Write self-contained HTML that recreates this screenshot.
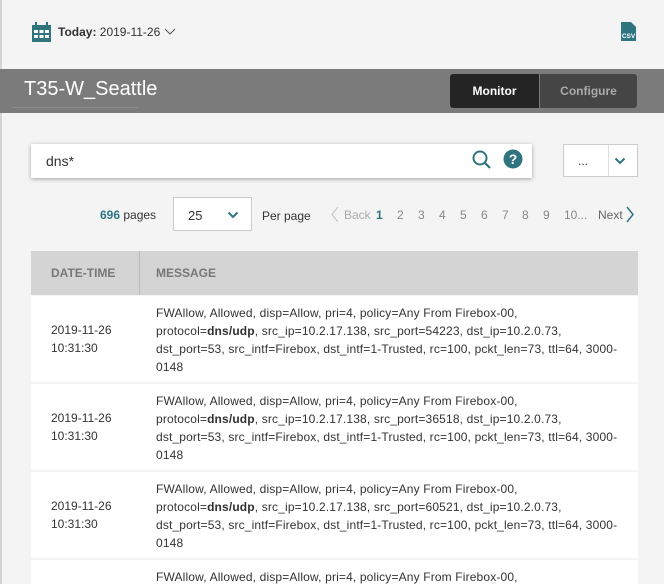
<!DOCTYPE html>
<html><head><meta charset="utf-8"><style>
html,body{margin:0;width:664px;height:584px;overflow:hidden}
body{background:#f4f4f4;font-family:"Liberation Sans",sans-serif;color:#333;position:relative}
.lb{position:absolute;left:0;top:0;width:2px;height:584px;background:#d4d4d4}
.abs{position:absolute}
.hdr{left:0;top:69px;width:664px;height:44px;background:#7b7b7b}
.title{left:24px;top:78px;color:#fff;font-size:20px}
.uline{left:12px;top:107px;width:126px;height:1px;background:#8d8d8d}
.btn{top:74px;height:34px;line-height:34px;text-align:center;font-size:12px;font-weight:bold}
.search{left:31px;top:144px;width:501px;height:34px;background:#fff;box-shadow:0 1px 4px rgba(0,0,0,.35)}
.sel{background:#fff;border:1px solid #ccc;box-sizing:border-box}
.pg span{position:absolute;top:208px;font-size:12px;color:#888}
.th{left:31px;top:251px;width:607px;height:44px;background:#d4d4d4;font-size:12px;font-weight:bold;color:#777}
.row{left:31px;width:607px;height:86px;background:#fff;font-size:12px;line-height:18px;overflow:hidden}
.row .d{position:absolute;left:20px;top:25px}
.row .m{position:absolute;left:125px;top:8px;width:480px;white-space:nowrap;letter-spacing:0.15px}
</style></head><body>
<div class="lb"></div>
<svg class="abs" style="left:32px;top:22px" width="19" height="20" viewBox="0 0 19 20"><rect x="0" y="3" width="19" height="17" fill="#2e7580"/><rect x="3" y="0" width="2" height="5" fill="#2e7580"/><rect x="14" y="0" width="2" height="5" fill="#2e7580"/><g fill="#fff"><rect x="2" y="8" width="4" height="3"/><rect x="7.5" y="8" width="4" height="3"/><rect x="13" y="8" width="4" height="3"/><rect x="2" y="13" width="4" height="3"/><rect x="7.5" y="13" width="4" height="3"/><rect x="13" y="13" width="4" height="3"/></g></svg>
<div class="abs" style="left:58px;top:25px;font-size:12px"><b>Today:</b> 2019-11-26 <svg width="12" height="8" viewBox="0 0 12 8"><path d="M1 1l5 5 5-5" stroke="#555" fill="none"/></svg></div>
<svg class="abs" style="left:621px;top:22px" width="15" height="19" viewBox="0 0 15 19"><path d="M0 0h10l5 5v14H0z" fill="#2e7580"/><text x="7.5" y="16" font-size="6.5" font-weight="bold" fill="#fff" text-anchor="middle" font-family="Liberation Sans">CSV</text></svg>
<div class="abs hdr"></div>
<div class="abs title">T35-W_Seattle</div>
<div class="abs uline"></div>
<div class="abs btn" style="left:450px;width:89px;background:#242424;color:#fff;border-radius:3px 0 0 3px">Monitor</div>
<div class="abs btn" style="left:540px;width:97px;background:#454545;color:#aaa;border-radius:0 3px 3px 0">Configure</div>
<div class="abs search"></div>
<div class="abs" style="left:46px;top:153px;font-size:14px">dns*</div>
<svg class="abs" style="left:472px;top:150px" width="20" height="20" viewBox="0 0 20 20"><circle cx="8" cy="8" r="6.5" stroke="#2e7580" stroke-width="2" fill="none"/><path d="M13 13l5 5" stroke="#2e7580" stroke-width="2.2"/></svg>
<svg class="abs" style="left:503px;top:149px" width="20" height="20" viewBox="0 0 20 20"><circle cx="10" cy="10" r="9.5" fill="#2e7580"/><text x="10" y="15" font-size="14" font-weight="bold" fill="#fff" text-anchor="middle" font-family="Liberation Sans">?</text></svg>
<div class="abs sel" style="left:563px;top:144px;width:75px;height:33px"></div>
<div class="abs" style="left:608px;top:145px;width:1px;height:31px;background:#ddd"></div>
<div class="abs" style="left:578px;top:154px;font-size:12px">...</div>
<svg class="abs" style="left:614px;top:157px" width="12" height="8" viewBox="0 0 12 8"><path d="M1.5 1.5l4.5 4.5 4.5-4.5" stroke="#2e7580" stroke-width="2" fill="none"/></svg>
<div class="abs" style="left:100px;top:208px;font-size:12px"><b style="color:#2e7580">696</b> pages</div>
<div class="abs sel" style="left:173px;top:197px;width:79px;height:34px"></div>
<div class="abs" style="left:188px;top:208px;font-size:13px">25</div>
<svg class="abs" style="left:227px;top:211px" width="12" height="8" viewBox="0 0 12 8"><path d="M1.5 1.5l4.5 4.5 4.5-4.5" stroke="#2e7580" stroke-width="2" fill="none"/></svg>
<div class="abs" style="left:262px;top:209px;font-size:12px">Per page</div>
<div class="pg">
<svg class="abs" style="left:331px;top:206px" width="8" height="17" viewBox="0 0 8 17"><path d="M7 1L1 8.5 7 16" stroke="#bbb" fill="none"/></svg>
<span style="left:344px;color:#aaa">Back</span>
<span style="left:376px;color:#2e7580;font-weight:bold">1</span>
<span style="left:397px">2</span><span style="left:418px">3</span><span style="left:439px">4</span><span style="left:460px">5</span><span style="left:481px">6</span><span style="left:502px">7</span><span style="left:522px">8</span><span style="left:543px">9</span><span style="left:564px">10...</span>
<span style="left:598px;color:#666">Next</span>
<svg class="abs" style="left:626px;top:206px" width="8" height="17" viewBox="0 0 8 17"><path d="M1 1l6 7.5L1 16" stroke="#2e7580" stroke-width="1.5" fill="none"/></svg>
</div>
<div class="abs th"><span class="abs" style="left:20px;top:15px">DATE-TIME</span><div class="abs" style="left:108px;top:0;width:1px;height:44px;background:#bbb"></div><span class="abs" style="left:125px;top:15px">MESSAGE</span></div>
<div class="abs row" style="top:296px"><div class="d">2019-11-26<br>10:31:30</div><div class="m">FWAllow, Allowed, disp=Allow, pri=4, policy=Any From Firebox-00,<br>protocol=<b>dns/udp</b>, src_ip=10.2.17.138, src_port=54223, dst_ip=10.2.0.73,<br>dst_port=53, src_intf=Firebox, dst_intf=1-Trusted, rc=100, pckt_len=73, ttl=64, 3000-<br>0148</div></div>
<div class="abs row" style="top:384px"><div class="d">2019-11-26<br>10:31:30</div><div class="m">FWAllow, Allowed, disp=Allow, pri=4, policy=Any From Firebox-00,<br>protocol=<b>dns/udp</b>, src_ip=10.2.17.138, src_port=36518, dst_ip=10.2.0.73,<br>dst_port=53, src_intf=Firebox, dst_intf=1-Trusted, rc=100, pckt_len=73, ttl=64, 3000-<br>0148</div></div>
<div class="abs row" style="top:472px"><div class="d">2019-11-26<br>10:31:30</div><div class="m">FWAllow, Allowed, disp=Allow, pri=4, policy=Any From Firebox-00,<br>protocol=<b>dns/udp</b>, src_ip=10.2.17.138, src_port=60521, dst_ip=10.2.0.73,<br>dst_port=53, src_intf=Firebox, dst_intf=1-Trusted, rc=100, pckt_len=73, ttl=64, 3000-<br>0148</div></div>
<div class="abs row" style="top:560px;height:24px"><div class="m">FWAllow, Allowed, disp=Allow, pri=4, policy=Any From Firebox-00,</div></div>
</body></html>
